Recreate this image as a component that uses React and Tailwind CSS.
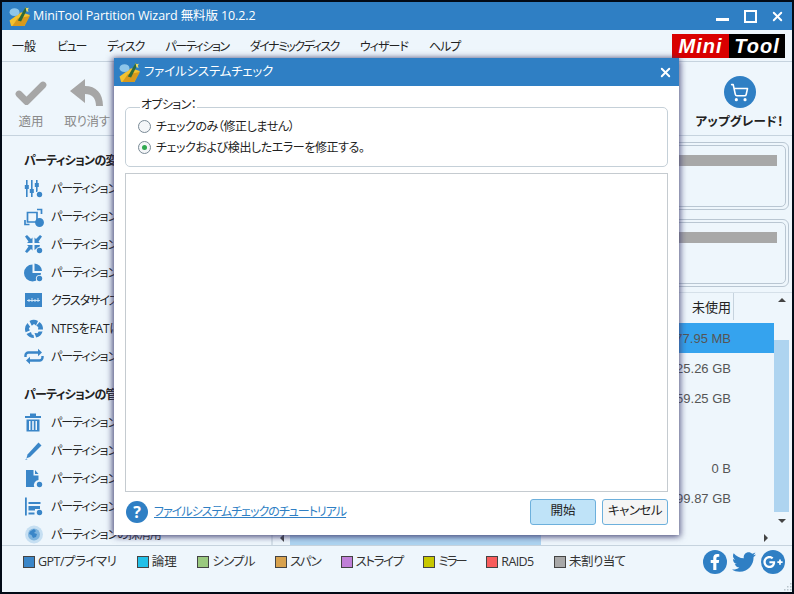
import React from "react";
import { FaFacebookF, FaTwitter, FaGooglePlusG } from "react-icons/fa";
import { ShoppingCart, X, Check } from "lucide-react";

const BLUE = "#3a86c8";

const Clock = () => (
  <g>
    <circle cx="15.5" cy="15.5" r="3.6" fill="#eef6fc" />
    <circle cx="15.5" cy="15.5" r="2.7" fill={BLUE} />
  </g>
);

const icons = {
  sliders: (
    <g fill={BLUE}>
      <rect x="2" y="1" width="1.6" height="17" />
      <rect x="0.8" y="6" width="4" height="4" />
      <rect x="7" y="1" width="1.6" height="17" />
      <rect x="5.8" y="10" width="4" height="4" />
      <rect x="12" y="1" width="1.6" height="12" />
      <rect x="10.8" y="4" width="4" height="4" />
      <Clock />
    </g>
  ),
  move: (
    <g fill="none" stroke={BLUE} strokeWidth="1.7">
      <path d="M3.5 5.5H13V15H3.5Z" />
      <path d="M13 2.5H17.5V7M1 13V17.5H5.5" />
      <Clock />
    </g>
  ),
  merge: (
    <g fill={BLUE}>
      <path d="M1 1.5 3 0l4 4 1.5-1.5V8H3l1.5-1.5Z" />
      <path d="M18 1.5 16 0l-4 4-1.5-1.5V8H16l-1.5-1.5Z" />
      <path d="M1 16.5 3 18l4-4 1.5 1.5V10H3l1.5 1.5Z" />
      <path d="M16 10h-5.5v5l1.5-1 2 2Z" />
      <Clock />
    </g>
  ),
  pie: (
    <g fill={BLUE}>
      <path d="M8.5 1.5V10H17A8.5 8.5 0 1 1 8.5 1.5Z" />
      <path d="M10.5 0.5A8 8 0 0 1 18 8H10.5Z" />
      <Clock />
    </g>
  ),
  cluster: (
    <g>
      <rect x="1" y="2" width="17" height="14" fill={BLUE} />
      <path d="M3 9.5H16M5 8v3M8 7v4M11 8v3M14 7v4" stroke="#dcecf8" strokeWidth="0.9" />
    </g>
  ),
  recycle: (
    <g fill={BLUE}>
      <path d="M5.5 2A9 9 0 0 1 14 2l-2 4.6L10 5 7.8 6.8Z" />
      <path d="M15.5 3A9 9 0 0 1 19 10.5h-5l.3-2.5-2-1.2Z" />
      <path d="M18.6 12.5a9 9 0 0 1-6.4 6L10.5 14l3 .3 1.2-1.8Z" />
      <path d="M10 19a9 9 0 0 1-7.5-4L7 13l.8 2.5 1.7.4Z" />
      <path d="M1.6 13.2A9 9 0 0 1 3.5 4L6.3 8 4.8 9l1 2.5Z" />
    </g>
  ),
  swap: (
    <g fill="none" stroke={BLUE} strokeWidth="2.4">
      <path d="M1.5 10V8.5A3 3 0 0 1 4.5 5.5H15" />
      <path d="M18.5 9v1.5a3 3 0 0 1-3 3H5" />
      <path d="M14 1.8 18 5.5 14 9.2" fill={BLUE} strokeWidth="0" />
      <path d="M6 9.8 2 13.5l4 3.7" fill={BLUE} strokeWidth="0" />
    </g>
  ),
  trash: (
    <g fill={BLUE}>
      <rect x="1" y="3" width="16" height="2" />
      <rect x="6" y="0.5" width="6" height="2.5" />
      <path d="M2.5 6.5H15.5V18.5H2.5ZM5 8V17H6.5V8ZM8.2 8V17H9.8V8ZM11.5 8V17H13V8Z" fillRule="evenodd" />
    </g>
  ),
  pencil: (
    <g fill={BLUE}>
      <path d="M14.5 1.5 17.5 4.5 6 16 2.5 17.2 3.5 13.5Z" />
      <path d="M1 19l1.5-1.5 1 .7Z" />
    </g>
  ),
  file: (
    <g fill={BLUE}>
      <path d="M2 1H9.5V6.5H14.5V11A5 5 0 0 0 10.3 18H2Z" />
      <path d="M11 1 14.5 5H11Z" />
      <Clock />
    </g>
  ),
  drive: (
    <g fill={BLUE}>
      <rect x="1" y="0.5" width="1.8" height="18" />
      <rect x="4.5" y="5" width="12" height="2" />
      <path d="M4.5 9H16V12H11V13.5H4.5Z" />
      <rect x="4.5" y="15.5" width="6" height="2" />
      <Clock />
    </g>
  ),
  globe: (
    <g>
      <circle cx="10" cy="9.5" r="9" fill="#c6dff2" />
      <circle cx="10" cy="9.5" r="6" fill="#7fb4de" />
      <path d="M6 6.5l4-2.5 2 2-2 2 3 1-1 3-3 1-1.5-3-2.5-1Z" fill="#3a86c8" />
    </g>
  ),
};

const Ico = ({ name }) => (
  <svg width="20" height="20" viewBox="0 0 20 20" className="shrink-0">
    {icons[name]}
  </svg>
);

const AppLogo = () => (
  <svg width="22" height="22" viewBox="0 0 20 20" className="shrink-0">
    <path d="M0.5 14 11 6.5 19 9 14 19 2 19Z" fill="#f2c230" />
    <path d="M3 19 8 12 19 10 14 19Z" fill="#d99a1c" />
    <ellipse cx="5" cy="6.5" rx="4.5" ry="3.6" fill="#8ec6ea" />
    <path d="M8 14 15 2l2 1-6 12Z" fill="#2e6a3a" />
    <path d="M15 1.5l1 1.5 2-.5-1 2 1 1.5-2 0-.5-2Z" fill="#f7e06a" />
  </svg>
);

const Row = ({ icon, label, track = "tracking-[-1px]" }) => (
  <div className="flex h-[28px] shrink-0 items-center gap-[7px] pl-[22px] whitespace-nowrap">
    <Ico name={icon} />
    <span className={`text-[12px] text-[#222] ${track}`}>{label}</span>
  </div>
);

const Heading = ({ children, className = "" }) => (
  <div className={`flex h-[28px] shrink-0 items-center pl-[22px] text-[12px] font-bold tracking-[-0.7px] whitespace-nowrap text-[#222] ${className}`}>
    {children}
  </div>
);

const Legend = ({ color, label, track }) => (
  <div className="flex items-center gap-[3px] whitespace-nowrap">
    <span className="h-[12px] w-[12px] border border-[#444]" style={{ background: color }} />
    <span className={`text-[12.5px] text-[#333] ${track}`}>{label}</span>
  </div>
);

const Social = ({ children }) => (
  <div className="flex h-[24px] w-[24px] items-center justify-center rounded-full bg-[#2f7fc4] text-white">
    {children}
  </div>
);

const Radio = ({ on, label }) => (
  <label className="flex h-[21px] items-center gap-[5px]">
    <span className="flex h-[13px] w-[13px] items-center justify-center rounded-full border border-[#7a8a96] bg-[#f4f6f8]">
      {on && <span className="h-[5px] w-[5px] rounded-full bg-[#2fa84f]" />}
    </span>
    <span className="text-[12px] tracking-[-0.4px] text-[#222]">{label}</span>
  </label>
);

const Cell = ({ children, selected }) => (
  <div className={`flex h-[30px] items-center justify-end pr-[43px] pt-[1px] font-['Liberation_Sans',sans-serif] text-[13px] text-[#555] ${selected ? "bg-[#35a3ee]" : ""}`}>
    {children}
  </div>
);

const DiskPanel = () => (
  <div className="rounded-[6px] border border-[#b9c6d2] p-[2px]">
    <div className="h-[62px] rounded-[5px] border border-[#b9c6d2] px-[8px] pt-[9px]">
      <div className="h-[11px] bg-[#a8a8a8]" />
    </div>
  </div>
);

const Arrow = ({ d }) => (
  <svg width="8" height="8" viewBox="0 0 8 8"><path d={d} fill="#444" /></svg>
);

const MENU = [
  ["一般", "tracking-[0px]"],
  ["ビュー", "tracking-[-1.3px]"],
  ["ディスク", "tracking-[-1px]"],
  ["パーティション", "tracking-[-1.4px]"],
  ["ダイナミックディスク", "tracking-[-1.5px]"],
  ["ウィザード", "tracking-[-1px]"],
  ["ヘルプ", "tracking-[-1px]"],
];

export default function App() {
  return (
    <div className="relative h-[594px] w-[794px] overflow-hidden bg-[#020a16] p-[2px] font-['Open_Sans','Noto_Sans_CJK_JP',sans-serif] [font-feature-settings:'palt']">
      <div className="flex h-full flex-col bg-[#eef6fc]">
        {/* title */}
        <div className="flex h-[28px] shrink-0 items-center bg-[#2f7fc4] pl-[7px] text-white">
          <AppLogo />
          <span className="ml-[2px] text-[12.5px] tracking-[-0.1px]">MiniTool Partition Wizard 無料版 10.2.2</span>
          <div className="ml-auto flex items-center gap-[15px] pr-[7px]">
            <span className="mt-[6px] h-[3px] w-[13px] bg-white" />
            <span className="h-[13px] w-[13px] border-2 border-white" />
            <X size={15} strokeWidth={3} className="ml-[-2px]" />
          </div>
        </div>
        {/* menu */}
        <div className="flex h-[32px] shrink-0 items-center justify-between border-b border-[#c6d3de] pl-[10px] pr-[7px]">
          <div className="mt-[3px] flex gap-[21px] text-[12px] whitespace-nowrap text-[#222]">
            {MENU.map(([m, t]) => (
              <span key={m} className={t}>{m}</span>
            ))}
          </div>
          <div className="flex h-[24px] w-[113px] font-['Liberation_Sans',sans-serif] text-[20px] font-bold italic tracking-[1px] text-white">
            <span className="flex w-[57px] items-center justify-center bg-[#d90000]">Mini</span>
            <span className="flex flex-1 items-center justify-center bg-black">Tool</span>
          </div>
        </div>
        {/* toolbar */}
        <div className="flex h-[74px] shrink-0 items-stretch justify-between border-b border-[#c6d3de]">
          <div className="flex gap-[16px] pl-[12px] pt-[14px] text-[12.5px] text-[#8a8a8a]">
            <div className="flex w-[34px] flex-col items-center">
              <Check size={36} strokeWidth={4.5} className="text-[#a6a6a6]" />
              <span className="mt-[1px]">適用</span>
            </div>
            <div className="flex w-[46px] flex-col items-center">
              <svg width="36" height="36" viewBox="0 0 36 36">
                <path d="M1 15 16 3v7c11 0 18 7 18 20h-7c0-8-4-12-11-12v9Z" fill="#a6a6a6" />
              </svg>
              <span className="mt-[1px] tracking-[-0.3px] whitespace-nowrap">取り消す</span>
            </div>
          </div>
          <div className="flex w-[100px] flex-col items-center pt-[14px] pr-[5px]">
            <div className="flex h-[32px] w-[32px] items-center justify-center rounded-full bg-[#2f7fc4] text-white">
              <ShoppingCart size={19} strokeWidth={2} />
            </div>
            <span className="mt-[5px] text-[12.5px] font-bold tracking-[0.2px] whitespace-nowrap text-[#222]">アップグレード！</span>
          </div>
        </div>
        {/* main */}
        <div className="flex min-h-0 flex-1">
          <div className="flex w-[269px] shrink-0 flex-col overflow-hidden pt-[11px]">
            <Heading>パーティションの変更</Heading>
            <Row icon="sliders" label="パーティションの調整" />
            <Row icon="move" label="パーティションの移動" />
            <Row icon="merge" label="パーティションの結合" />
            <Row icon="pie" label="パーティションの分割" />
            <Row icon="cluster" label="クラスタサイズの変更" />
            <Row icon="recycle" label="NTFSをFATに変換" track="tracking-[-0.2px]" />
            <Row icon="swap" label="パーティションの変換" />
            <Heading className="mt-[10px]">パーティションの管理</Heading>
            <Row icon="trash" label="パーティションの削除" />
            <Row icon="pencil" label="パーティションの編集" />
            <Row icon="file" label="パーティションのコピー" />
            <Row icon="drive" label="パーティションの設定" />
            <Row icon="globe" label="パーティションの抹消用" />
          </div>
          <div className="flex min-w-0 flex-1 flex-col border-l border-[#d5e0e9]">
            <div className="flex h-[156px] shrink-0 flex-col gap-[9px] pt-[6px] pr-[3px] pl-[6px]">
              <DiskPanel />
              <DiskPanel />
            </div>
            <div className="flex min-h-0 flex-1 border-t border-[#d5e0e9]">
              <div className="min-w-0 flex-1">
                <div className="flex h-[27px] items-center justify-end">
                  <span className="mr-[40px] flex h-full items-center border-r border-[#c6d3de] pt-[3px] pr-[2px] text-[13px] text-[#222]">未使用</span>
                </div>
                <div className="mt-[3px]">
                  <Cell selected>77.95 MB</Cell>
                  <Cell>25.26 GB</Cell>
                  <Cell>59.25 GB</Cell>
                  <div className="h-[40px]" />
                  <Cell>0 B</Cell>
                  <Cell>99.87 GB</Cell>
                </div>
              </div>
              <div className="mr-[3px] flex w-[15px] shrink-0 flex-col items-center pt-[3px]">
                <Arrow d="M4 2 8 6H0Z" />
                <div className="mt-[36px] h-[172px] w-full bg-[#aed4f0]" />
                <div className="mt-[5px]"><Arrow d="M0 2H8L4 6Z" /></div>
              </div>
            </div>
            <div className="flex h-[15px] shrink-0 items-center border-l border-[#d5e0e9]">
              <div className="flex w-[17px] justify-center"><Arrow d="M6 0V8L2 4Z" /></div>
              <div className="h-full w-[251px] bg-[#aed4f0]" />
              <div className="mr-[22px] ml-auto"><Arrow d="M2 0V8L6 4Z" /></div>
            </div>
          </div>
        </div>
        {/* legend */}
        <div className="relative flex h-[47px] shrink-0 items-start gap-[20.5px] border-t border-[#c6d3de] pt-[7px] pl-[21px]">
          <Legend color="#3a86c8" label="GPT/プライマリ" track="tracking-[-0.5px]" />
          <Legend color="#22c0e8" label="論理" track="tracking-[0px]" />
          <Legend color="#9ac97f" label="シンプル" track="tracking-[-0.8px]" />
          <Legend color="#d8a24e" label="スパン" track="tracking-[-1.6px]" />
          <Legend color="#c080d8" label="ストライプ" track="tracking-[-1.4px]" />
          <Legend color="#c8c800" label="ミラー" track="tracking-[-2px]" />
          <Legend color="#f85c5c" label="RAID5" track="tracking-[-0.6px]" />
          <Legend color="#a8a8a8" label="未割り当て" track="tracking-[-0.6px]" />
          <div className="mt-[-3px] ml-auto flex items-center gap-[5px] pr-[7px]">
            <Social><FaFacebookF size={16} /></Social>
            <div className="flex h-[24px] w-[24px] items-center justify-center text-[#2f7fc4]"><FaTwitter size={24} /></div>
            <Social><FaGooglePlusG size={20} /></Social>
          </div>
          <svg width="10" height="10" viewBox="0 0 10 10" className="absolute right-0 bottom-0">
            <path d="M8 1h1.5v1.5H8zM5 4h1.5v1.5H5zM8 4h1.5v1.5H8zM2 7h1.5v1.5H2zM5 7h1.5v1.5H5zM8 7h1.5v1.5H8z" fill="#b8c4cc" />
          </svg>
        </div>
      </div>

      {/* dialog */}
      <div className="absolute top-[58px] left-[114px] flex h-[477px] w-[565px] flex-col bg-white shadow-[-2px_0_6px_rgba(60,60,110,0.75),2px_2px_6px_rgba(60,60,110,0.6)]">
        <div className="flex h-[28px] shrink-0 items-center bg-[#2f7fc4] pr-[6px] pl-[5px] text-white">
          <AppLogo />
          <span className="mt-[1px] ml-[3px] text-[12.5px] tracking-[-0.2px]">ファイルシステムチェック</span>
          <X size={15} strokeWidth={3} className="ml-auto" />
        </div>
        <div className="flex min-h-0 flex-1 flex-col px-[11px]">
          <fieldset className="mt-[15px] h-[66px] shrink-0 rounded-[5px] border border-[#c5d0d8] pt-[3px] pl-[12px]">
            <legend className="ml-[2px] translate-y-[-2px] px-[1px] text-[12px] leading-[12px] tracking-[-0.6px] text-[#222]">オプション：</legend>
            <Radio label="チェックのみ（修正しません）" />
            <Radio on label="チェックおよび検出したエラーを修正する。" />
          </fieldset>
          <div className="mt-[6px] h-[319px] w-[543px] shrink-0 border border-[#c5cbd0]" />
          <div className="flex flex-1 items-center pb-[4px]">
            <div className="ml-[1px] flex h-[22px] w-[22px] items-center justify-center rounded-full bg-[#2f7fc4] text-[16px] font-bold text-white">?</div>
            <span className="ml-[6px] text-[12px] tracking-[-1px] text-[#2f7fc4] underline">ファイルシステムチェックのチュートリアル</span>
            <button className="ml-auto h-[26px] w-[66px] rounded-[3px] border border-[#6db0dc] bg-[#bfe3f8] text-[12.5px] text-[#222]">開始</button>
            <button className="ml-[6px] h-[26px] w-[66px] rounded-[3px] border border-[#6db0dc] bg-[#f5f5f5] text-[12.5px] tracking-[-0.5px] text-[#222]">キャンセル</button>
          </div>
        </div>
      </div>
    </div>
  );
}
